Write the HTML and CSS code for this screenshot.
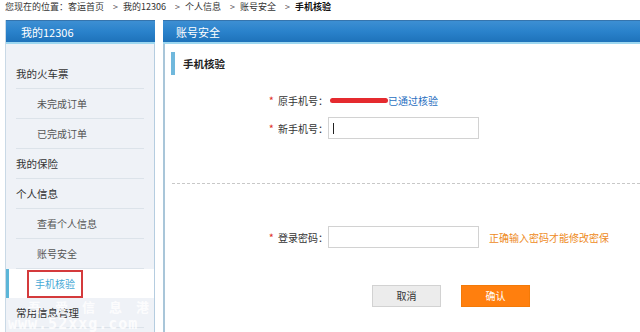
FILE: index.html
```html
<!DOCTYPE html>
<html lang="zh-CN">
<head>
<meta charset="utf-8">
<title>手机核验</title>
<link rel="stylesheet" href="styles.css">
</head>
<body>
<div class="crumb">您现在的位置：客运首页<span class="sep">&gt;</span>我的12306<span class="sep">&gt;</span>个人信息<span class="sep">&gt;</span>账号安全<span class="sep">&gt;</span><b>手机核验</b></div>
<div class="main">
  <aside class="side">
    <div class="head">我的12306</div>
    <ul class="menu">
      <li class="top">我的火车票</li>
      <li class="sub">未完成订单</li>
      <li class="sub">已完成订单</li>
      <li class="top">我的保险</li>
      <li class="top">个人信息</li>
      <li class="sub">查看个人信息</li>
      <li class="sub">账号安全</li>
      <li class="sub active"><span class="box">手机核验</span></li>
      <li class="top">常用信息管理</li>
    </ul>
    <div class="wm"><div class="wm-cn">吾爱信息港</div><div class="wm-en">www.52xxg.com</div></div>
  </aside>
  <section class="panel">
    <div class="head">账号安全</div>
    <div class="body">
      <h2 class="title">手机核验</h2>
      <div class="row r1">
        <label class="lbl"><i>*</i>原手机号：</label>
        <span class="blot"></span><a class="ok">已通过核验</a>
      </div>
      <div class="row r2">
        <label class="lbl"><i>*</i>新手机号：</label>
        <span class="input"><span class="caret"></span></span>
      </div>
      <div class="dash"></div>
      <div class="row r3">
        <label class="lbl"><i>*</i>登录密码：</label>
        <span class="input"></span>
        <span class="hint">正确输入密码才能修改密保</span>
      </div>
      <div class="btns">
        <span class="btn cancel">取消</span>
        <span class="btn confirm">确认</span>
      </div>
    </div>
  </section>
</div>
</body>
</html>
```
FILE: styles.css
```css
* { box-sizing: border-box; }
html, body { margin: 0; padding: 0; background: #fff; }
body {
  font-family: "Noto Sans CJK SC", "Noto Sans", sans-serif;
  font-size: 10px;
  color: #333;
  width: 640px;
  height: 332px;
  overflow: hidden;
}
.crumb {
  height: 20px;
  line-height: 14px;
  padding-left: 5px;
  color: #333;
  font-size: 9px;
}
.crumb .sep { margin: 0 5px 0 9px; color: #555; }
.crumb b { font-weight: 700; color: #111; }

.main { display: flex; gap: 8px; padding-left: 5px; height: 312px; overflow: hidden; }

.head {
  height: 24px;
  line-height: 22px;
  color: #fff;
  font-size: 11px;
  background: linear-gradient(#3d8fd3, #2a82cb 50%, #1e72ba);
  border-top: 1px solid #3574ad;
  border-bottom: 2px solid #9dd7f0;
}

.side {
  position: relative;
  width: 150px;
  height: 312px;
  background: #eff2f7;
  border-right: 1px solid #b5cde0;
  border-left: 1px solid #c9d9e6;
}
.side .head { padding-left: 15px; margin: 0 -1px 0 0; }
.menu { list-style: none; margin: 0; padding: 15px 0 0; }
.menu li {
  height: 30px;
  line-height: 29px;
  margin: 0 10px;
  border-bottom: 1px solid #dce3ea;
}
.menu .top { font-size: 10.5px; color: #333; }
.menu .sub { padding-left: 21px; color: #555; font-size: 10px; }
.menu .active {
  margin: 0;
  padding-left: 18px;
  background: #fff;
  border-bottom: none;
  border-left: 3px solid #5cb6d8;
  height: 29px;
}
.menu .active .box {
  display: inline-block;
  height: 28px;
  line-height: 24px;
  padding: 0 6px;
  border: 2px solid #d43a3c;
  color: #47a9d6;
}

.wm {
  position: absolute;
  left: 2px;
  top: 278px;
  width: 160px;
  color: rgba(255,255,255,0.85);
  font-weight: 700;
  white-space: nowrap;
  pointer-events: none;
}
.wm-cn { font-size: 13px; letter-spacing: 14px; line-height: 18px; padding-left: 20px; }
.wm-en { font-family: "DejaVu Sans Mono", monospace; font-size: 15px; line-height: 16px; letter-spacing: 1px; }

.panel {
  flex: 1;
  height: 312px;
  border-left: 2px solid #a9c6d9;
}
.panel .head { padding-left: 13px; margin-left: -2px; }
.panel .body { padding-top: 8px; }
.title {
  margin: 0 0 0 6px;
  height: 23px;
  line-height: 23px;
  font-size: 10.5px;
  font-weight: 700;
  color: #222;
  border-left: 4px solid #70b8dc;
  padding-left: 8px;
}
.row { display: flex; align-items: center; height: 22px; }
.r1 { margin-top: 14px; }
.r2 { margin-top: 6px; }
.r3 { margin-top: 42px; }
.lbl {
  width: 163px;
  text-align: right;
  color: #333;
  font-size: 10px;
}
.lbl i { font-style: normal; color: #e0302a; margin-right: 4px; font-size: 11px; }
.blot {
  display: inline-block;
  width: 58px;
  height: 5px;
  margin-left: 2px;
  background: #e52a2f;
  border-radius: 3px;
}
.ok { color: #2a6fc0; font-size: 10px; }
.input {
  display: inline-block;
  width: 151px;
  height: 22px;
  border: 1px solid #d2d2d2;
  background: #fff;
  position: relative;
}
.caret {
  position: absolute;
  left: 4px;
  top: 5px;
  width: 1px;
  height: 11px;
  background: #222;
}
.dash {
  margin: 44px 0 0 7px;
  border-top: 1px dashed #c8c8c8;
}
.hint { margin-left: 10px; color: #ee8a22; font-size: 10px; }
.btns { display: flex; gap: 20px; margin: 37px 0 0 207px; }
.btn {
  width: 69px;
  height: 22px;
  line-height: 20px;
  text-align: center;
  font-size: 10px;
}
.cancel { background: #ececec; border: 1px solid #d2d2d2; color: #333; }
.confirm { background: #ff7f0e; border: 1px solid #f37a08; color: #fff; }
```
